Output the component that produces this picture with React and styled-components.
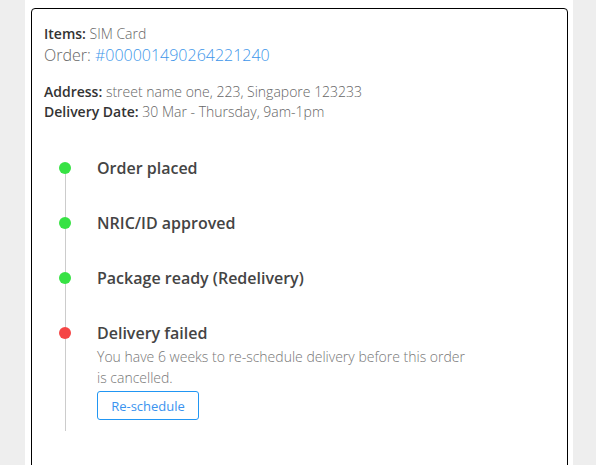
// Libraries.
import React from 'react';
import styled, { createGlobalStyle } from 'styled-components';


// Global styles.
const GlobalStyle = createGlobalStyle`
    body {
        margin     : 0;
        background : #eeeeee;
        font-family: "Open Sans", "Noto Sans", sans-serif;
        overflow   : hidden;
    }
`;

// Styled Components.
const Page = styled.div`
    width      : 548px;
    margin-left: 25px;
    height     : 465px;
    overflow   : hidden;
    background : white;
    padding    : 8px 5px 0 6px;
    box-sizing : border-box;
`;

const Card = styled.div`
    border       : 1px solid #000;
    border-radius: 4px;
    padding      : 15px 12px 40px;
    min-height   : 480px;
    box-sizing   : border-box;
`;

const Line = styled.div`
    font-size  : 14px;
    line-height: 20px;
    font-weight: 300;
    color      : #666;
`;

const Label = styled.span`
    font-weight: 600;
    color      : #333;
`;

const OrderLine = styled.div`
    font-size    : 16px;
    line-height  : 22px;
    font-weight  : 300;
    color        : #666;
    margin-bottom: 16px;
`;

const OrderNumber = styled.span`
    color: #3d96ea;
`;

const Timeline = styled.div`
    position      : relative;
    margin-top    : 35px;
    padding-left  : 22px;
    padding-bottom: 11px;

    &::before {
        content   : '';
        position  : absolute;
        top       : 11px;
        bottom    : 0;
        left      : 21px;
        width     : 1px;
        background: #cccccc;
    }
`;

const Step = styled.div`
    position     : relative;
    padding-left : 31px;
    margin-bottom: 33px;

    &:last-child {
        margin-bottom: 0;
    }

    &::before {
        content      : '';
        position     : absolute;
        left         : -7px;
        top          : 5px;
        width        : 12px;
        height       : 12px;
        border-radius: 50%;
        background   : ${props => props.$failed ? '#f54646' : '#37e244'};
    }
`;

const StepTitle = styled.div`
    font-size  : 16px;
    line-height: 22px;
    font-weight: 600;
    color      : #444;
`;

const StepText = styled.p`
    margin     : 2px 0 0;
    max-width  : 380px;
    font-size  : 14px;
    line-height: 21px;
    font-weight: 300;
    color      : #777;
`;

const Button = styled.button`
    margin-top   : 3px;
    width        : 102px;
    height       : 29px;
    padding      : 0;
    background   : white;
    border       : 1px solid #2196f3;
    border-radius: 3px;
    color        : #3a93ef;
    font-family  : "Open Sans", "Noto Sans", sans-serif;
    font-size    : 13px;
    cursor       : pointer;
`;


const steps = [
    { title: 'Order placed' },
    { title: 'NRIC/ID approved' },
    { title: 'Package ready (Redelivery)' },
    {
        title : 'Delivery failed',
        failed: true,
        text  : 'You have 6 weeks to re-schedule delivery before this order is cancelled.',
    },
];


// App.
function App() {
    return (
        <>
            <GlobalStyle />
            <Page>
                <Card>
                    <Line><Label>Items:</Label> SIM Card</Line>
                    <OrderLine>Order: <OrderNumber>#000001490264221240</OrderNumber></OrderLine>
                    <Line><Label>Address:</Label> street name one, 223, Singapore 123233</Line>
                    <Line><Label>Delivery Date:</Label> 30 Mar - Thursday, 9am-1pm</Line>

                    <Timeline>
                        {steps.map(step => (
                            <Step key={step.title} $failed={step.failed}>
                                <StepTitle>{step.title}</StepTitle>
                                {step.text && <StepText>{step.text}</StepText>}
                                {step.failed && <Button>Re-schedule</Button>}
                            </Step>
                        ))}
                    </Timeline>
                </Card>
            </Page>
        </>
    );
}

export default App;
